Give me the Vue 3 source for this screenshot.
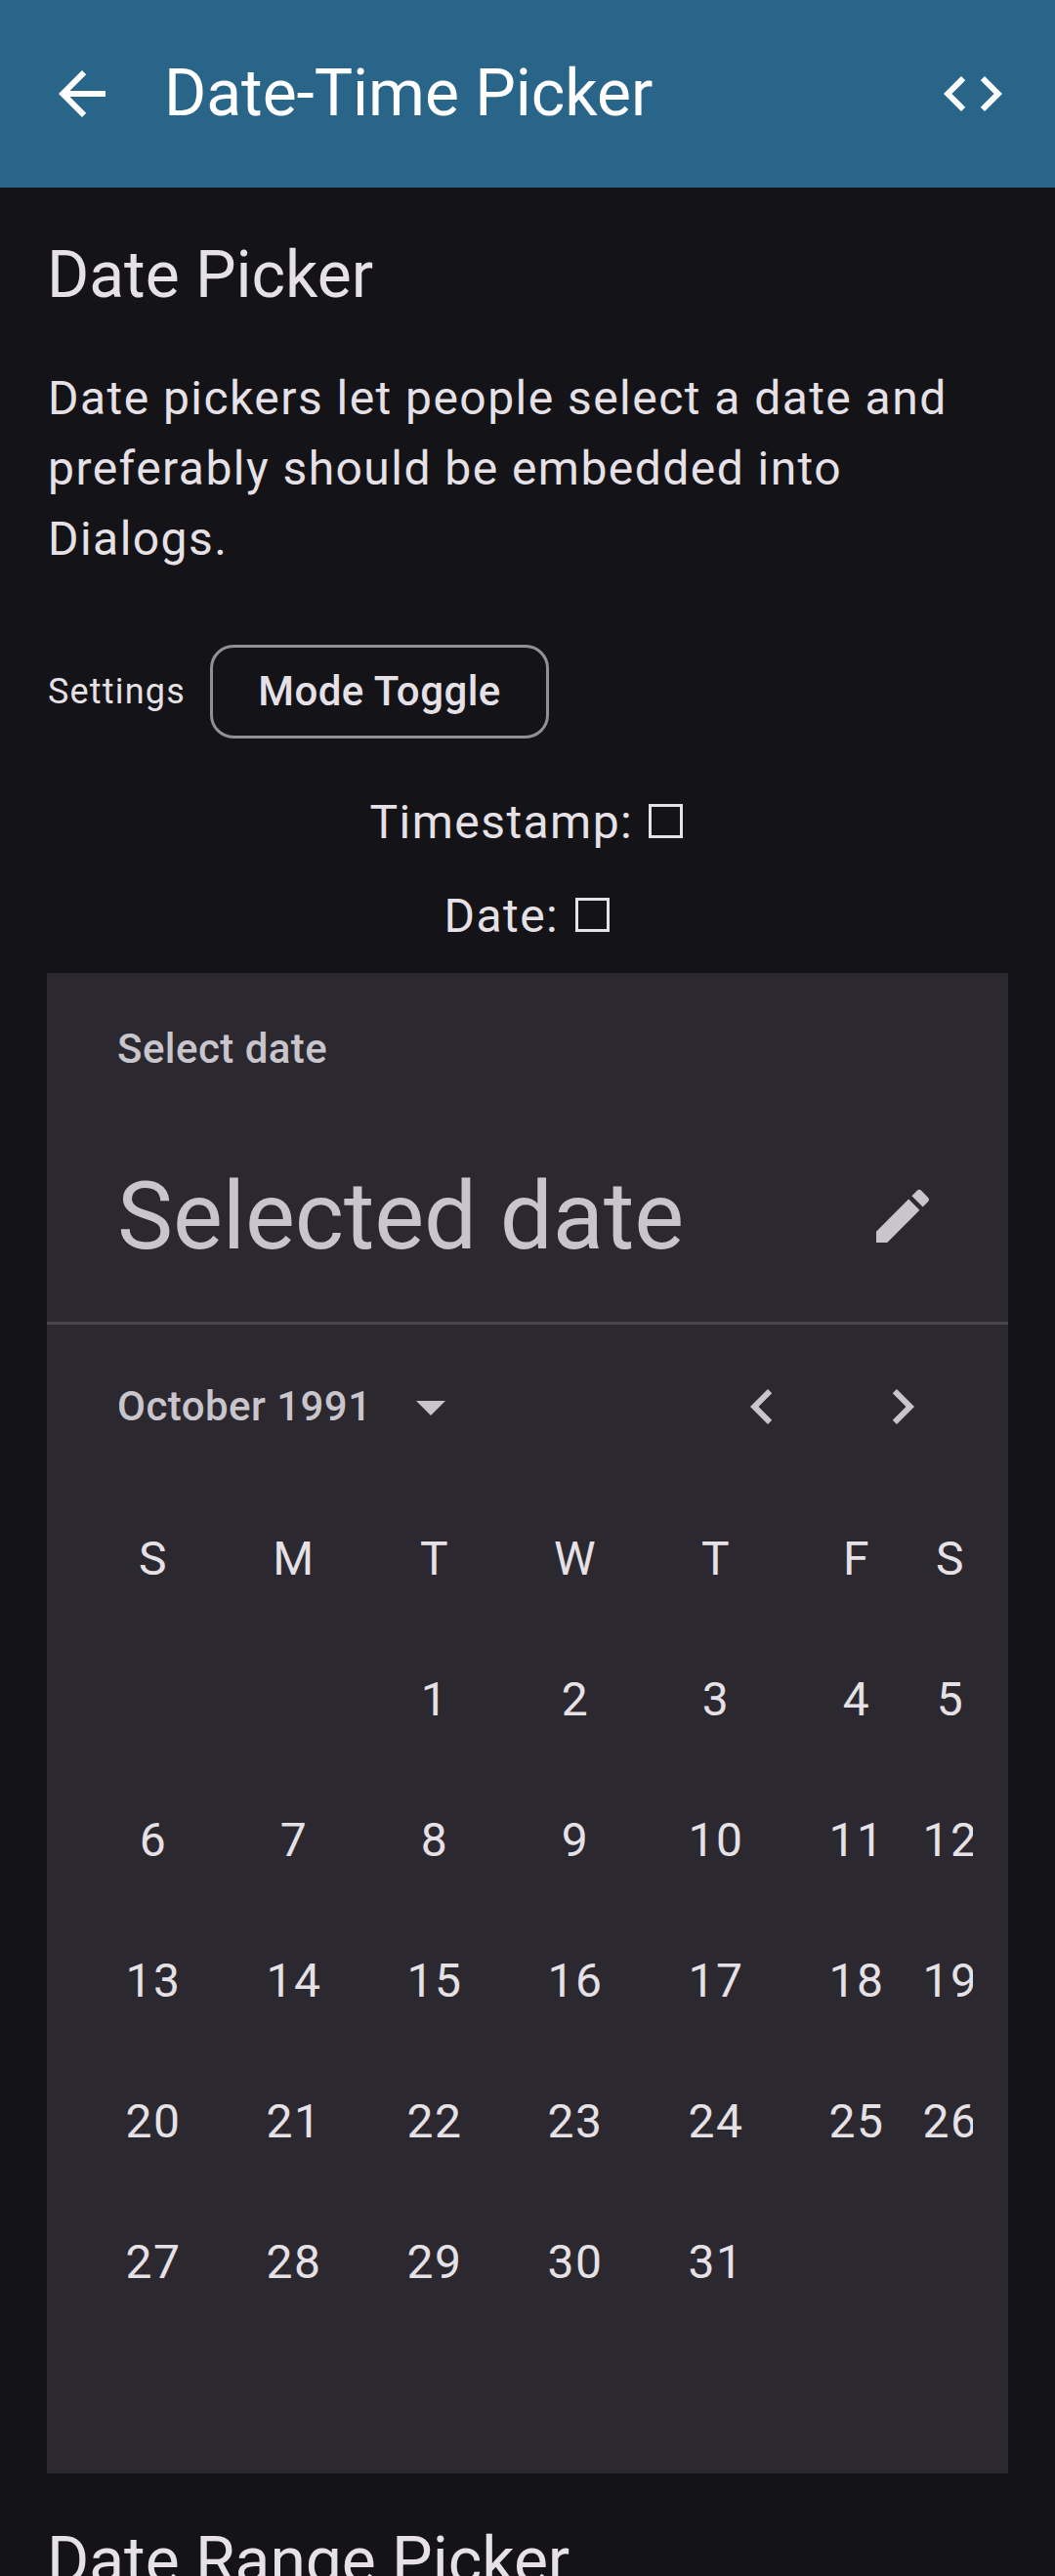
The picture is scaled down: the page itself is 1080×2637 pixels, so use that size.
<script setup>
const weekdays = ['S', 'M', 'T', 'W', 'T', 'F', 'S']
const leadingBlanks = 2
const cells = Array.from({ length: 35 }, (_, i) => {
  const day = i - leadingBlanks + 1
  return day >= 1 && day <= 31 ? String(day) : ''
})
const weeks = Array.from({ length: 5 }, (_, w) => cells.slice(w * 7, w * 7 + 7))
const rows = [weekdays, ...weeks]
</script>

<template>
  <div class="screen">
    <header class="app-bar">
      <svg class="icon" viewBox="0 0 24 24"><path d="M20 11H7.83l5.59-5.59L12 4l-8 8 8 8 1.41-1.41L7.83 13H20v-2z" /></svg>
      <h1 class="app-title">Date-Time Picker</h1>
      <svg class="icon" viewBox="0 0 24 24"><path d="M9.4 16.6 4.8 12l4.6-4.6L8 6l-6 6 6 6 1.4-1.4zm5.2 0 4.6-4.6-4.6-4.6L16 6l6 6-6 6-1.4-1.4z" /></svg>
    </header>

    <main class="content">
      <h2 class="heading">Date Picker</h2>
      <p class="body">Date pickers let people select a date and preferably should be embedded into Dialogs.</p>

      <div class="settings">
        <span class="settings-label">Settings</span>
        <button class="toggle" type="button">Mode Toggle</button>
      </div>

      <div class="readout">Timestamp: <span class="box"></span></div>
      <div class="readout second">Date: <span class="box"></span></div>

      <section class="picker">
        <div class="picker-head">
          <div class="picker-label">Select date</div>
          <div class="headline-row">
            <span class="headline">Selected date</span>
            <svg class="icon" viewBox="0 0 24 24"><path d="M3 17.25V21h3.75L17.81 9.94l-3.75-3.75L3 17.25zM20.71 7.04c.39-.39.39-1.02 0-1.41l-2.34-2.34a.996.996 0 0 0-1.41 0l-1.83 1.83 3.75 3.75 1.83-1.83z" /></svg>
          </div>
        </div>

        <div class="month-row">
          <span class="month">October 1991</span>
          <svg class="icon" viewBox="0 0 24 24"><path d="M7 10l5 5 5-5z" /></svg>
          <span class="spacer"></span>
          <svg class="icon" viewBox="0 0 24 24"><path d="M15.41 7.41 14 6l-6 6 6 6 1.41-1.41L10.83 12z" /></svg>
          <svg class="icon next" viewBox="0 0 24 24"><path d="M10 6 8.59 7.41 13.17 12l-4.58 4.59L10 18l6-6z" /></svg>
        </div>

        <div class="calendar">
          <div v-for="(row, r) in rows" :key="r" class="week">
            <div v-for="(cell, c) in row" :key="c" class="day"><span>{{ cell }}</span></div>
          </div>
        </div>
      </section>

      <h2 class="heading range">Date Range Picker</h2>
    </main>
  </div>
</template>

<style>
html,
body {
  background: #141318;
  overflow: hidden;
}
</style>

<style scoped>
.screen {
  width: 1080px;
  height: 2637px;
  overflow: hidden;
  background: #141318;
  color: #e6e1e6;
  font-family: Roboto, sans-serif;
  font-weight: 400;
}
.icon {
  display: block;
  flex: none;
  width: 72px;
  height: 72px;
  fill: currentColor;
}
.app-bar {
  box-sizing: border-box;
  height: 192px;
  padding: 0 48px;
  display: flex;
  align-items: center;
  background: #296588;
  color: #fff;
}
.app-title {
  flex: 1;
  margin: 0 0 0 48px;
  font-size: 66px;
  line-height: 84px;
  font-weight: 400;
  letter-spacing: -0.05px;
}
.content {
  padding: 48px 48px 0;
}
.heading {
  margin: 0;
  font-size: 66px;
  line-height: 84px;
  font-weight: 400;
  letter-spacing: -0.05px;
}
.body {
  margin: 48px 0 0;
  padding-left: 1px;
  font-size: 48px;
  line-height: 72px;
  letter-spacing: 1.45px;
}
.settings {
  display: flex;
  align-items: center;
  height: 96px;
  margin-top: 72px;
}
.settings-label {
  box-sizing: border-box;
  width: 167px;
  padding-left: 1px;
  font-size: 36px;
  line-height: 48px;
  letter-spacing: 1.2px;
}
.toggle {
  box-sizing: border-box;
  width: 347px;
  height: 96px;
  padding: 0;
  border: 3px solid #929095;
  border-radius: 24px;
  background: none;
  color: inherit;
  font: 500 42px/60px Roboto, sans-serif;
  letter-spacing: 0.45px;
}
.readout {
  margin-top: 50px;
  padding-left: 2px;
  text-align: center;
  font-size: 48px;
  line-height: 72px;
  height: 72px;
  letter-spacing: 1.45px;
}
.readout.second {
  margin-top: 24px;
}
.box {
  display: inline-block;
  box-sizing: border-box;
  width: 35px;
  height: 35px;
  margin: 0 4px 0 3px;
  border: 3px solid currentColor;
}
.picker {
  box-sizing: border-box;
  height: 1536px;
  margin-top: 22px;
  background: #2b292f;
}
.picker-head {
  box-sizing: border-box;
  height: 360px;
  padding: 48px 72px 0;
  border-bottom: 3px solid #48454e;
  color: #c9c5cd;
}
.picker-label {
  font-size: 42px;
  line-height: 60px;
  font-weight: 500;
  letter-spacing: 0.45px;
}
.headline-row {
  display: flex;
  align-items: center;
  justify-content: space-between;
  height: 120px;
  margin-top: 81px;
}
.headline {
  font-size: 96px;
  line-height: 120px;
  letter-spacing: -0.1px;
}
.month-row {
  display: flex;
  align-items: center;
  height: 168px;
  padding: 0 72px;
  color: #c9c5cd;
}
.month {
  width: 285px;
  font-size: 42px;
  line-height: 60px;
  font-weight: 500;
  letter-spacing: 0.45px;
}
.spacer {
  flex: 1;
}
.next {
  margin-left: 72px;
}
.calendar {
  margin: 0 36px;
}
.week {
  display: grid;
  grid-template-columns: repeat(6, 144px) 48px;
  height: 144px;
  overflow: hidden;
}
.day {
  box-sizing: border-box;
  padding-left: 2px;
  display: flex;
  align-items: center;
  justify-content: center;
  font-size: 48px;
  line-height: 72px;
  letter-spacing: 1.5px;
  white-space: nowrap;
}
.range {
  margin-top: 48px;
}
</style>
